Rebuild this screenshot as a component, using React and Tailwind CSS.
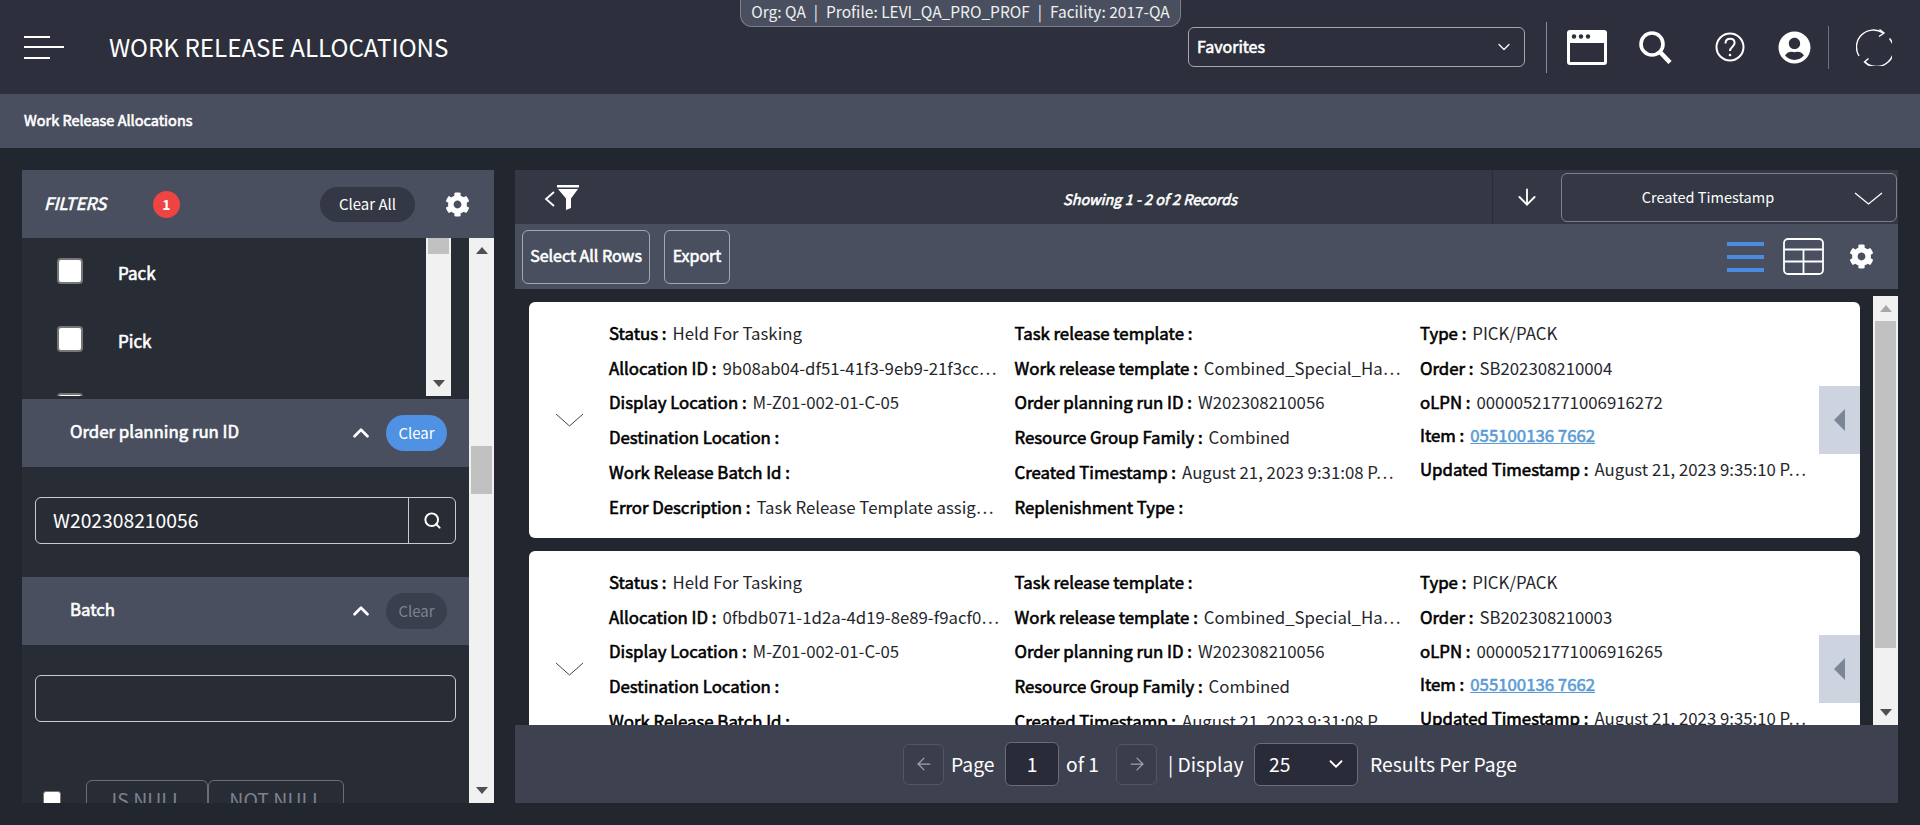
import React from 'react';
import { ArrowDown, ArrowLeft, ArrowRight, ChevronDown, ChevronUp, Search } from 'lucide-react';
import { FaCog, FaUserCircle } from 'react-icons/fa';

const SMEAR = '[-webkit-text-stroke:0.6px_currentColor]';

const CARDS = [
    {
        id: '9b08ab04-df51-41f3-9eb9-21f3cc…',
        order: 'SB202308210004',
        olpn: '00000521771006916272',
    },
    {
        id: '0fbdb071-1d2a-4d19-8e89-f9acf0…',
        order: 'SB202308210003',
        olpn: '00000521771006916265',
    },
];

const Field = ({ label, value, link, rowHeight = 'h-[34.8px]' }) => (
    <div className={`${rowHeight} flex items-center whitespace-nowrap text-[16.8px] text-[#25272c]`}>
        <span className={`${SMEAR} text-black`}>{label} :</span>
        {value && <span className="ml-[6px]">{value}</span>}
        {link && <span className={`${SMEAR} ml-[6px] text-[#5b9bd5] underline`}>{link}</span>}
    </div>
);

const Card = ({ id, order, olpn }) => (
    <div className="relative shrink-0 h-[236px] w-[1331px] bg-white rounded-md flex">
        <div className="w-[80px] flex items-center justify-center">
            <svg width="29" height="14" viewBox="0 0 29 14" fill="none" stroke="#444" strokeWidth="1">
                <path d="M1 1l13.500 12L28 1" />
            </svg>
        </div>
        <div className="w-[405.500px] pt-[14px]">
            <Field label="Status" value="Held For Tasking" />
            <Field label="Allocation ID" value={id} />
            <Field label="Display Location" value="M-Z01-002-01-C-05" />
            <Field label="Destination Location" />
            <Field label="Work Release Batch Id" />
            <Field label="Error Description" value="Task Release Template assig…" />
        </div>
        <div className="w-[405.500px] pt-[14px]">
            <Field label="Task release template" />
            <Field label="Work release template" value="Combined_Special_Ha…" />
            <Field label="Order planning run ID" value="W202308210056" />
            <Field label="Resource Group Family" value="Combined" />
            <Field label="Created Timestamp" value="August 21, 2023 9:31:08 P…" />
            <Field label="Replenishment Type" />
        </div>
        <div className="pt-[14px]">
            <Field label="Type" value="PICK/PACK" />
            <Field label="Order" value={order} />
            <Field label="oLPN" value={olpn} />
            <Field label="Item" link="055100136 7662" rowHeight="h-[31px]" />
            <Field label="Updated Timestamp" value="August 21, 2023 9:35:10 P…" rowHeight="h-[37px]" />
        </div>
        {/* side tab */}
        <div className="absolute right-0 top-[84px] w-[41px] h-[68px] bg-[#cdd3df] flex items-center justify-center">
            <svg width="11" height="22" viewBox="0 0 11 22"><path d="M11 0v22L0 11z" fill="#7b8798" /></svg>
        </div>
    </div>
);

const Arrow = ({ up, color = '#505050' }) => (
    <div className="h-[25px] w-full flex items-center justify-center shrink-0">
        <svg width="12" height="7" viewBox="0 0 12 7">
            <path d={up ? 'M6 0l6 7H0z' : 'M0 0h12L6 7z'} fill={color} />
        </svg>
    </div>
);

const SectionHeader = ({ title, active }) => (
    <div className="h-[68px] bg-[#494f5f] flex items-center pl-[48px] pr-[22px]">
        <span className={`${SMEAR} flex-1 pb-[2px] text-[16.800px] text-white`}>{title}</span>
        <ChevronUp size={26} strokeWidth={2.500} className="text-white mr-[12px]" />
        <div className={`w-[61px] h-[36px] rounded-full flex items-center justify-center text-[15px] ${active ? 'bg-[#4f92e3] text-white' : 'bg-[#3a3f4d] text-[#7d828f]'}`}>
            Clear
        </div>
    </div>
);

const WindowIcon = () => (
    <svg width="40" height="35" viewBox="0 0 40 35" className="ml-[20px]">
        <rect x="0" y="0" width="40" height="35" rx="3" fill="#fff" />
        <rect x="3" y="13" width="34" height="19" fill="#2d303c" />
        <circle cx="7" cy="6.500" r="2.200" fill="#2d303c" />
        <circle cx="14" cy="6.500" r="2.200" fill="#2d303c" />
        <circle cx="21" cy="6.500" r="2.200" fill="#2d303c" />
    </svg>
);

const SearchIcon = () => (
    <svg width="33" height="33" viewBox="0 0 33 33" fill="none" stroke="#fff" className="ml-[32px]">
        <circle cx="13" cy="13" r="11" strokeWidth="3.600" />
        <path d="M21 21l10 10.500" strokeWidth="4.500" />
    </svg>
);

const HelpIcon = () => (
    <svg width="30" height="30" viewBox="0 0 30 30" fill="none" stroke="#fff" strokeWidth="2" className="ml-[43px]">
        <circle cx="15" cy="15" r="13.500" />
        <path d="M10.500 11.500c0-3 2-4.700 4.600-4.700s4.500 1.700 4.500 4.200c0 3.600-4.600 3.800-4.600 8" />
        <circle cx="15" cy="23" r="1.300" fill="#fff" stroke="none" />
    </svg>
);

const RefreshIcon = () => (
    <svg width="36" height="37" viewBox="0 0 36 37" fill="none" stroke="#fff" strokeWidth="1.400" className="ml-[27px]">
        <path d="M3 27A17 17 0 0 1 27 4" />
        <path d="M23.500 .5L28 4l-5 3.500" />
        <path d="M33.500 9.500A17 17 0 0 1 9 33" />
        <path d="M12.500 29.500L8.500 33l4.500 3.500" />
    </svg>
);

const TableIcon = () => (
    <svg width="41" height="37" viewBox="0 0 41 37" fill="none" stroke="#fff" strokeWidth="1.800" className="ml-[19px]">
        <rect x="1" y="1" width="39" height="35" rx="4" />
        <path d="M1 11.500h39M1 23.500h39M20.500 11.500V36" />
    </svg>
);

const ListIcon = () => (
    <div className="w-[37px] h-[30px] flex flex-col justify-between">
        <div className="h-[4px] bg-[#4a8cdf]" />
        <div className="h-[4px] bg-[#4a8cdf]" />
        <div className="h-[4px] bg-[#4a8cdf]" />
    </div>
);

const FilterIcon = () => (
    <svg width="35" height="25" viewBox="0 0 35 25" className="ml-[29px]">
        <path d="M10 7l-8 7 8 7" fill="none" stroke="#fff" strokeWidth="1.800" />
        <path d="M13 0h22v2.500H13zM14 4h20l-7 9.500V23l-5 2V13.500z" fill="#fff" />
    </svg>
);

const App = () => {
    return (
        <div className="h-[825px] w-[1920px] overflow-hidden bg-[#22262f] text-white font-['Noto_Sans_CJK_SC','Noto_Sans',sans-serif]">
            {/* top bar */}
            <div className="relative h-[94px] bg-[#2d303c] flex items-center pl-[24px] pr-[28px]">
                <div className="w-[40px] h-[23px] flex flex-col justify-between">
                    <div className="h-[2px] w-[26px] bg-white" />
                    <div className="h-[2px] w-[40px] bg-white" />
                    <div className="h-[2px] w-[26px] bg-white" />
                </div>
                <div className="ml-[45px] text-[24.2px] leading-none whitespace-nowrap">WORK RELEASE ALLOCATIONS</div>
                <div className="flex-1" />
                <div className="w-[337px] h-[40px] border border-[#a5a7ad] rounded-md flex items-center justify-between pl-[8px] pr-[10px]">
                    <span className={`${SMEAR} text-[16px] pb-[2px]`}>Favorites</span>
                    <ChevronDown size={20} strokeWidth={1.500} />
                </div>
                <div className="ml-[21px] w-px h-[51px] bg-[#8b8d95]" />
                <WindowIcon />
                <SearchIcon />
                <HelpIcon />
                <FaUserCircle size={33} className="ml-[33px]" />
                <div className="ml-[17px] w-px h-[43px] bg-[#6f727c]" />
                <RefreshIcon />
                {/* org context pill */}
                <div className="absolute left-[740px] top-0 w-[441px] h-[27px] pb-[2px] bg-[#494f5f] border border-t-0 border-[#7c808c] rounded-b-xl flex items-center justify-center text-[15.500px] text-[#f0f0f0] whitespace-nowrap">
                    Org: QA<span className="mx-[8px]">|</span>Profile: LEVI_QA_PRO_PROF<span className="mx-[8px]">|</span>Facility: 2017-QA
                </div>
            </div>

            {/* breadcrumb */}
            <div className={`${SMEAR} h-[54px] bg-[#494f5f] flex items-center pl-[24px] pb-[2px] text-[14.500px]`}>Work Release Allocations</div>

            <div className="flex gap-[21px] pl-[22px] pt-[22px]">
                {/* filters */}
                <div className="w-[472px] h-[633px] flex flex-col">
                    <div className="h-[68px] shrink-0 bg-[#494f5f] flex items-center pl-[22px]">
                        <span className={`${SMEAR} w-[109px] pb-[2px] text-[17px] italic`}>FILTERS</span>
                        <div className="w-[27px] h-[27px] rounded-full bg-[#ee4444] flex items-center justify-center text-[14px] font-bold">1</div>
                        <div className="ml-[140px] w-[95px] h-[35px] rounded-full bg-[#343844] flex items-center justify-center text-[15px]">Clear All</div>
                        <FaCog size={25} className="ml-[30px]" />
                    </div>
                    <div className="flex flex-1 min-h-0">
                        <div className="w-[447px] overflow-hidden bg-[#282c35]">
                            <div className="h-[158px] overflow-hidden flex">
                                <div className="w-[404px] overflow-hidden pl-[35px] pt-[20px]">
                                    <div className="h-[68px] flex items-start">
                                        <div className="w-[26px] h-[26px] rounded-[4px] bg-white border-2 border-[#777]" />
                                        <span className={`${SMEAR} ml-[35px] text-[17px] leading-[30px]`}>Pack</span>
                                    </div>
                                    <div className="h-[67px] flex items-start">
                                        <div className="w-[26px] h-[26px] rounded-[4px] bg-white border-2 border-[#777]" />
                                        <span className={`${SMEAR} ml-[35px] text-[17px] leading-[30px]`}>Pick</span>
                                    </div>
                                    <div className="w-[26px] h-[26px] rounded-[4px] bg-white border-2 border-[#777]" />
                                </div>
                                <div className="w-[25px] bg-[#f1f1f1] flex flex-col items-center">
                                    <div className="w-[21px] h-[16px] bg-[#c1c1c1] shrink-0" />
                                    <div className="mt-auto w-full"><Arrow /></div>
                                </div>
                            </div>
                            <div className="mt-[3px]"><SectionHeader title="Order planning run ID" active /></div>
                            <div className="px-[13px] pt-[30px] pb-[33px]">
                                <div className="h-[47px] border border-[#c9cacd] rounded-md flex items-center">
                                    <span className="flex-1 pl-[17px] text-[19.300px]">W202308210056</span>
                                    <div className="w-[47px] h-full border-l border-[#c9cacd] flex items-center justify-center">
                                        <Search size={19} strokeWidth={2.500} />
                                    </div>
                                </div>
                            </div>
                            <SectionHeader title="Batch" />
                            <div className="px-[13px] pt-[30px]">
                                <div className="h-[47px] border border-[#c9cacd] rounded-md" />
                            </div>
                            <div className="flex items-start pl-[21px] pt-[58px]">
                                <div className="mt-[11px] w-[18px] h-[18px] rounded-[3px] bg-white border border-[#777]" />
                                <div className="ml-[25px] w-[122px] h-[44px] pb-[5px] border border-[#6a6d78] rounded-t-md flex items-center justify-center text-[19.500px] text-[#7d828f]">IS NULL</div>
                                <div className="w-[136px] h-[44px] pb-[5px] border border-[#6a6d78] rounded-t-md flex items-center justify-center text-[19.500px] text-[#7d828f]">NOT NULL</div>
                            </div>
                        </div>
                        <div className="w-[25px] bg-[#f1f1f1] flex flex-col items-center">
                            <Arrow up />
                            <div className="mt-[183px] w-[21px] h-[48px] bg-[#c1c1c1] shrink-0" />
                            <div className="mt-auto w-full"><Arrow /></div>
                        </div>
                    </div>
                </div>

                {/* results */}
                <div className="w-[1383px] h-[633px] flex flex-col">
                    <div className="h-[54px] shrink-0 bg-[#343844] flex items-center">
                        <div className="w-[293px] flex items-center"><FilterIcon /></div>
                        <div className={`${SMEAR} flex-1 pt-[4px] text-center text-[14.400px] italic`}>Showing 1 - 2 of 2 Records</div>
                        <div className="w-[69px] h-full border-l border-[#292c36] flex items-center justify-center">
                            <ArrowDown size={26} strokeWidth={1.700} />
                        </div>
                        <div className="relative w-[336px] h-[49px] mr-px border border-[#7d808a] rounded-md flex items-center justify-center pr-[42px] text-[14.500px]">
                            Created Timestamp
                            <svg width="29" height="13" viewBox="0 0 29 13" fill="none" stroke="#fff" strokeWidth="1.300" className="absolute right-[13px] top-[18px]">
                                <path d="M1 1l13.500 11L28 1" />
                            </svg>
                        </div>
                    </div>
                    <div className="h-[65px] shrink-0 bg-[#494f5f] flex items-center pl-[7px] pr-[24px]">
                        <div className={`${SMEAR} w-[128px] h-[54px] pb-[3px] border border-[#a5a7ad] rounded-md flex items-center justify-center text-[16px] whitespace-nowrap`}>Select All Rows</div>
                        <div className={`${SMEAR} ml-[14px] w-[66px] h-[54px] pb-[3px] border border-[#a5a7ad] rounded-md flex items-center justify-center text-[16px]`}>Export</div>
                        <div className="flex-1" />
                        <ListIcon />
                        <TableIcon />
                        <FaCog size={25} className="ml-[25px]" />
                    </div>
                    <div className="h-[436px] shrink-0 flex">
                        <div className="w-[1358px] overflow-hidden pl-[14px] pt-[13px] flex flex-col gap-[13px]">
                            {CARDS.map((c) => <Card key={c.id} {...c} />)}
                        </div>
                        <div className="w-[25px] mt-[7px] bg-[#f1f1f1] flex flex-col items-center">
                            <Arrow up color="#a8a8a8" />
                            <div className="w-[21px] h-[327px] bg-[#c1c1c1] shrink-0" />
                            <div className="mt-auto w-full"><Arrow /></div>
                        </div>
                    </div>
                    <div className="h-[78px] shrink-0 bg-[#3e4150] flex items-center pl-[388px] text-[19.300px] whitespace-nowrap">
                        <div className="w-[41px] h-[41px] bg-[#3a3d4b] border border-[#525562] rounded-md flex items-center justify-center text-[#a0a3ad]">
                            <ArrowLeft size={20} strokeWidth={1.500} />
                        </div>
                        <span className="ml-[7px] w-[54px]">Page</span>
                        <div className="w-[54px] h-[44px] bg-[#2a2b38] border border-[#6a6d78] rounded-md flex items-center justify-center">1</div>
                        <span className="ml-[7px] w-[50px]">of 1</span>
                        <div className="w-[41px] h-[41px] bg-[#3a3d4b] border border-[#525562] rounded-md flex items-center justify-center text-[#a0a3ad]">
                            <ArrowRight size={20} strokeWidth={1.500} />
                        </div>
                        <span className="ml-[11px] w-[86px]">| Display</span>
                        <div className="w-[104px] h-[43px] bg-[#2a2b38] border border-[#6a6d78] rounded-md flex items-center justify-between pl-[14px] pr-[10px]">
                            25
                            <ChevronDown size={22} strokeWidth={2} />
                        </div>
                        <span className="ml-[12px]">Results Per Page</span>
                    </div>
                </div>
            </div>
        </div>
    );
};

export default App;
